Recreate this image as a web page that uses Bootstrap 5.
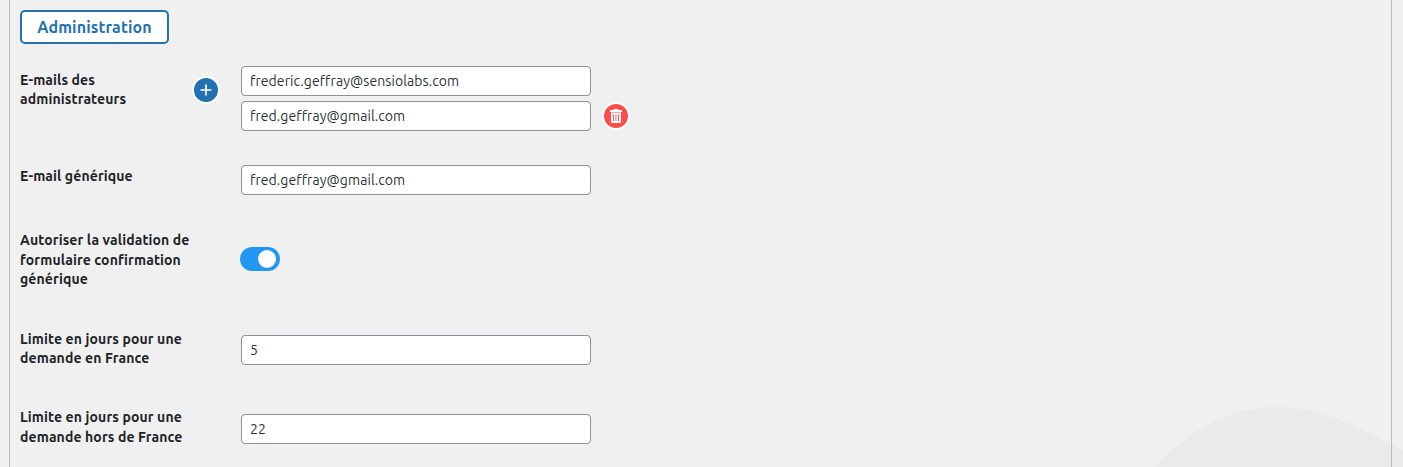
<!DOCTYPE html>
<html lang="fr">
<head>
<meta charset="utf-8">
<meta name="viewport" content="width=device-width, initial-scale=1">
<title>Administration</title>
<link href="https://cdn.jsdelivr.net/npm/bootstrap@5.3.0/dist/css/bootstrap.min.css" rel="stylesheet">
<style>
body{background:#f0f0f0;color:#1d2327;font-family:Ubuntu,"Noto Sans",sans-serif;font-size:14px;line-height:19.6px;height:467px;overflow:hidden}
.panel{margin:0 11px 0 9px;height:467px;border:solid #bbb;border-width:0 1px;padding:10px 10px 0}
.wave{right:0;bottom:0;z-index:-1}
.tab-title{width:149px;height:34px;border:2px solid #2271b1;border-radius:5px;color:#2271b1;background:#fff;font-size:16px;font-weight:700;padding:0;line-height:30px;letter-spacing:.14px}
.field-label{width:174px;font-size:14px;font-weight:700;white-space:nowrap;letter-spacing:.12px;padding-top:1px}
.r1 .field-label{padding-top:4.7px}
.r2 .field-label{padding-top:2px}
.r4 .field-label{padding-top:.7px}
.field-tool{width:47px}
.form-control.field{width:350px;height:30px;min-height:30px;border:1px solid #8c8f94;border-radius:4px;padding:0 8px;color:#2c3338;font-size:14px;line-height:28px;letter-spacing:.08px}
.round-btn{width:28px;height:28px;border:2px solid #fff;padding:0;color:#fff}
.add{background:#2271b1;margin:10px 0 0 -2px}
.del{background:#ff4d4d;margin-left:11px}
.switch-row .form-switch{padding:0;margin:17px 0 0 -1px;min-height:0;line-height:0}
.form-switch .form-check-input{width:40px;height:24px;margin:0;float:none;border:0;background:#2196f3;position:relative}
.form-check-input::after{content:"";position:absolute;width:18px;height:18px;right:4px;top:3px;border-radius:50%;background:#fff}
.r1{height:99px;margin-top:22px}.r2{height:65px}.r3{height:99px}.r4{height:78px}
.r4 .field{margin-top:6px}.r5 .field{margin-top:7px}
</style>
</head>
<body>
<svg class="wave position-absolute" width="280" height="80" viewBox="0 0 280 80"><path fill="#eaeaea" d="M32 80C67 42 107 20 155 20C194 20 233 38 280 63V80Z"/></svg>
<main class="panel">
<button class="btn tab-title d-block">Administration</button>
<div class="d-flex r1">
<label class="field-label" for="a1">E-mails des<br>administrateurs</label>
<div class="field-tool"><button class="btn rounded-circle round-btn add d-flex align-items-center justify-content-center" aria-label="Ajouter"><svg width="12" height="12" viewBox="0 0 12 12"><path d="M6 .5V11.5M.5 6H11.5" stroke="#fff" stroke-width="1.7"/></svg></button></div>
<div class="d-flex flex-column" style="gap:5px">
<input id="a1" class="form-control field" value="frederic.geffray@sensiolabs.com">
<div class="d-flex align-items-center"><input class="form-control field" aria-label="E-mail" value="fred.geffray@gmail.com"><button class="btn rounded-circle round-btn del d-flex align-items-center justify-content-center" aria-label="Supprimer"><svg width="12" height="14" viewBox="0 0 12 14"><path fill="#fff" fill-rule="evenodd" d="M3.6 0H8.4V1H12V3H0V1H3.6ZM1 3.5H11V12.5Q11 14 9.5 14H2.5Q1 14 1 12.5ZM3 5.2V12H3.9V5.2ZM5.5 5.2V12H6.4V5.2ZM8.1 5.2V12H9V5.2Z"/></svg></button></div>
</div>
</div>
<div class="d-flex r2">
<label class="field-label" for="g">E-mail générique</label><div class="field-tool"></div>
<input id="g" class="form-control field" value="fred.geffray@gmail.com">
</div>
<div class="d-flex r3 switch-row">
<label class="field-label" for="s">Autoriser la validation de<br>formulaire confirmation<br>générique</label><div class="field-tool"></div>
<div class="form-check form-switch"><input id="s" class="form-check-input" type="checkbox" role="switch" checked></div>
</div>
<div class="d-flex r4">
<label class="field-label" for="f">Limite en jours pour une<br>demande en France</label><div class="field-tool"></div>
<input id="f" class="form-control field" value="5">
</div>
<div class="d-flex r5">
<label class="field-label" for="h">Limite en jours pour une<br>demande hors de France</label><div class="field-tool"></div>
<input id="h" class="form-control field" value="22">
</div>
</main>
<script src="https://cdn.jsdelivr.net/npm/bootstrap@5.3.0/dist/js/bootstrap.bundle.min.js"></script>
</body>
</html>
